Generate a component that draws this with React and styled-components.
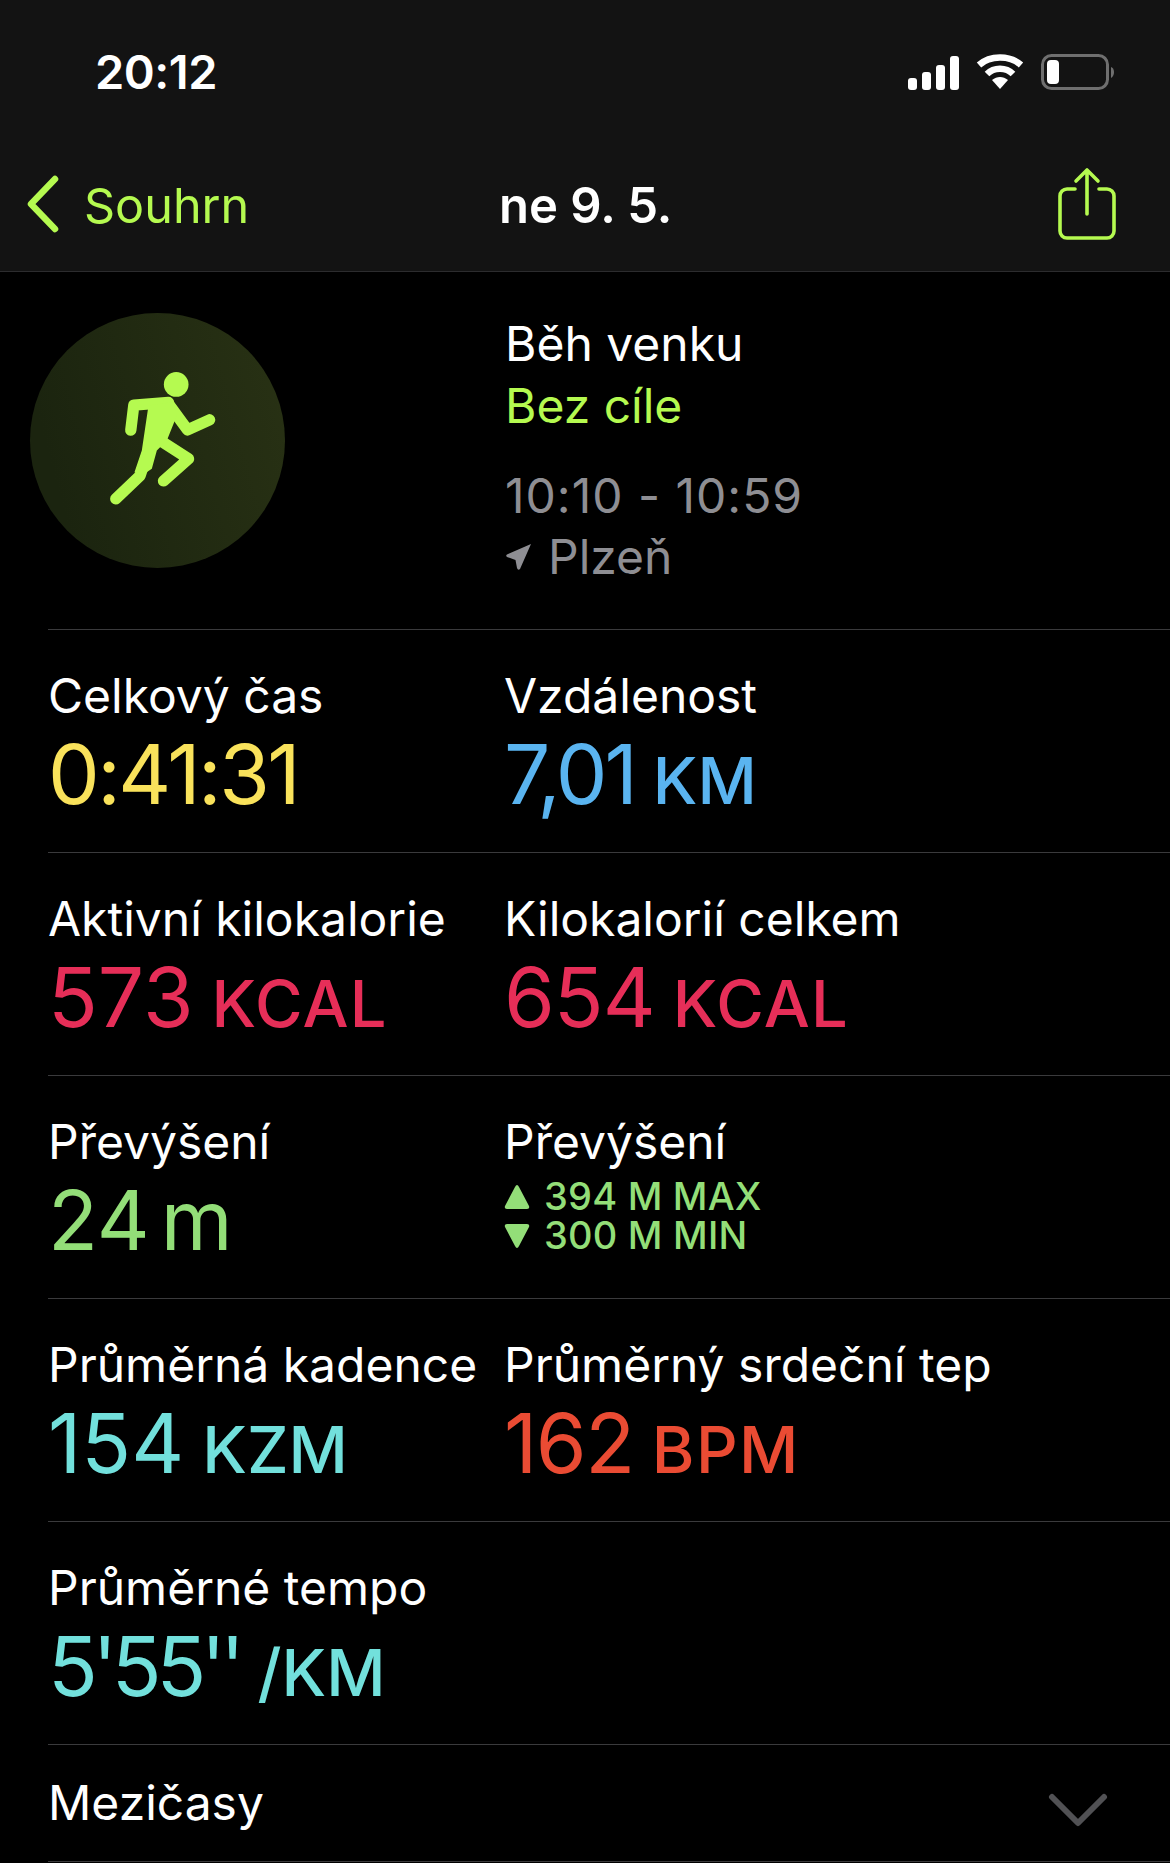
import React from 'react'
import styled, { createGlobalStyle } from 'styled-components'

const lime = '#b5fa50'

const GlobalStyle = createGlobalStyle`
  html, body {
    margin: 0;
    padding: 0;
    background: #000;
  }
  * {
    box-sizing: border-box;
  }
`

const Page = styled.div`
  width: 1170px;
  height: 1863px;
  overflow: hidden;
  background: #000;
  color: #fff;
  font-family: Inter, "Liberation Sans", sans-serif;
`

const Header = styled.header`
  height: 272px;
  background: #131313;
  border-bottom: 1px solid #2c2c2e;
`

const StatusBar = styled.div`
  height: 144px;
  padding: 46px 55px 0 95px;
  display: flex;
  justify-content: space-between;
`

const Clock = styled.div`
  font-size: 47px;
  line-height: 52px;
  font-weight: 600;
  letter-spacing: -0.5px;
`

const StatusIcons = styled.div`
  display: flex;
  align-items: flex-end;
  gap: 17px;
  height: 44px;
`

const NavBar = styled.nav`
  display: grid;
  grid-template-columns: 473px auto 1fr;
  align-items: center;
  height: 123px;
  padding: 0 54px 0 26px;
`

const BackLink = styled.div`
  display: flex;
  align-items: center;
  gap: 22px;
  color: ${lime};
  font-size: 48.5px;
`

const BackIcon = styled.span`
  display: flex;
  margin-top: -3px;
`

const Title = styled.div`
  font-size: 49px;
  font-weight: 600;
  letter-spacing: 0;
`

const ShareButton = styled.div`
  justify-self: end;
  display: flex;
  margin-top: -3px;
`

const Summary = styled.section`
  height: 357px;
  padding: 41px 0 0 30px;
  display: grid;
  grid-template-columns: 475px 1fr;
`

const Badge = styled.div`
  width: 255px;
  height: 255px;
  border-radius: 50%;
  background: linear-gradient(75deg, #1b240f 15%, #283114 95%);
  display: flex;
`

const Info = styled.div`
  display: flex;
  flex-direction: column;
`

const InfoLine = styled.div`
  font-size: 48px;
  line-height: 62px;
  color: ${(p) => p.$color || '#fff'};
  margin-top: ${(p) => p.$gap || 0}px;
  letter-spacing: ${(p) => p.$tracking || 0}px;
  display: flex;
  align-items: center;
  gap: 15px;
`

const Row = styled.div`
  margin-left: 48px;
  height: 223px;
  border-top: 1px solid #3a3a3c;
  padding-top: 35px;
  display: grid;
  grid-template-columns: 456px 1fr;
`

const Metric = styled.div`
  display: flex;
  flex-direction: column;
`

const Label = styled.div`
  font-size: 48px;
  line-height: 62px;
  white-space: nowrap;
`

const Value = styled.div`
  color: ${(p) => p.$color};
  font-size: 82px;
  line-height: 96px;
  letter-spacing: ${(p) => p.$tracking || 0}px;
  word-spacing: -12px;
  white-space: nowrap;
  display: flex;
  align-items: baseline;
  gap: 18px;
`

const Unit = styled.span`
  font-size: 65px;
  font-weight: 500;
  letter-spacing: ${(p) => p.$tracking || 0}px;
`

const Range = styled.div`
  color: #93de78;
  font-size: 38px;
  line-height: 39px;
  font-weight: 500;
  letter-spacing: 0.2px;
  padding-top: 4px;
`

const RangeLine = styled.div`
  display: flex;
  align-items: center;
  gap: 14px;
`

const Splits = styled.div`
  margin-left: 48px;
  height: 118px;
  border-top: 1px solid #3a3a3c;
  border-bottom: 1px solid #3a3a3c;
  padding: 27px 62px 0 0;
  display: flex;
  justify-content: space-between;
  align-items: flex-start;
  font-size: 48px;
  line-height: 62px;
`

const SplitsChevron = styled.span`
  display: flex;
  margin-top: 20px;
`

const Signal = () => (
  <svg width="51" height="34" viewBox="0 0 51 34" fill="#fff">
    <rect x="0" y="22" width="9" height="12" rx="3" />
    <rect x="14" y="16" width="9" height="18" rx="3" />
    <rect x="28" y="9" width="9" height="25" rx="3" />
    <rect x="42" y="0" width="9" height="34" rx="3" />
  </svg>
)

const Wifi = () => (
  <svg width="48" height="36" viewBox="0 0 48 36" fill="none" stroke="#fff" strokeWidth="6.5">
    <path d="M3 11 C14 1 34 1 45 11" />
    <path d="M11 20 C18 13 30 13 37 20" />
    <path d="M16 26 L24 35 L32 26 C27 22 21 22 16 26 Z" fill="#fff" stroke="none" />
  </svg>
)

const Battery = () => (
  <svg width="74" height="36" viewBox="0 0 74 36">
    <rect x="1.5" y="1.5" width="65" height="33" rx="9" fill="none" stroke="#6f6f6f" strokeWidth="3" />
    <rect x="6" y="6" width="12" height="24" rx="4" fill="#fff" />
    <path d="M70 13 C74 14 74 22 70 24 Z" fill="#6f6f6f" />
  </svg>
)

const Chevron = () => (
  <svg width="36" height="58" viewBox="0 0 36 58" fill="none" stroke={lime} strokeWidth="6.5" strokeLinecap="round" strokeLinejoin="round">
    <path d="M29 4 L5 29 L29 54" />
  </svg>
)

const ShareIcon = () => (
  <svg width="58" height="74" viewBox="0 0 58 74" fill="none" stroke={lime} strokeWidth="3.6" strokeLinecap="round" strokeLinejoin="round">
    <path d="M17 22 H9 A7 7 0 0 0 2 29 V64 A7 7 0 0 0 9 71 H49 A7 7 0 0 0 56 64 V29 A7 7 0 0 0 49 22 H41" />
    <path d="M29 47 V3 M18 14 L29 3 L40 14" />
  </svg>
)

const Runner = () => (
  <svg width="255" height="255" viewBox="90 68 764 764">
    <circle cx="528" cy="282" r="37" fill={lime} />
    <g fill="none" stroke={lime} strokeLinecap="round" strokeLinejoin="round" strokeWidth="34">
      <path d="M392 419 L401 344 L505 336" />
      <path d="M505 340 L562 418 L628 388" />
      <path d="M480 450 L565 505 L490 571" />
      <path d="M347 625 L420 555 L445 480" />
    </g>
    <path d="M445 345 L520 335 L530 375 L500 450 L470 480 L455 535 L425 555 L403 545 L425 480 Z" fill={lime} />
  </svg>
)

const LocationArrow = () => (
  <svg width="28" height="28" viewBox="0 0 28 28" fill="#8e8e93">
    <path d="M26 1 L15 26 Q13 28 12 25 L10.5 17 L2 14 Q0 12 3 11 Z" />
  </svg>
)

const ArrowUp = () => (
  <svg width="26" height="26" viewBox="0 0 26 26" fill="#93de78">
    <path d="M13 1 Q14 1 15 3 L25 22 Q26 25 23 25 H3 Q0 25 1 22 L11 3 Q12 1 13 1 Z" />
  </svg>
)

const ArrowDown = () => (
  <svg width="26" height="26" viewBox="0 0 26 26" fill="#93de78">
    <path d="M13 25 Q14 25 15 23 L25 4 Q26 1 23 1 H3 Q0 1 1 4 L11 23 Q12 25 13 25 Z" />
  </svg>
)

const DownChevron = () => (
  <svg width="60" height="36" viewBox="0 0 60 36" fill="none" stroke="#515154" strokeWidth="6" strokeLinecap="round" strokeLinejoin="round">
    <path d="M4 5 L30 31 L56 5" />
  </svg>
)

const StatMetric = ({ label, value, unit, color, tracking, unitTracking }) => (
  <Metric>
    <Label>{label}</Label>
    <Value $color={color} $tracking={tracking}>
      {value}
      {unit && <Unit $tracking={unitTracking}>{unit}</Unit>}
    </Value>
  </Metric>
)

export default function App() {
  return (
    <Page>
      <GlobalStyle />
      <Header>
        <StatusBar>
          <Clock>20:12</Clock>
          <StatusIcons>
            <Signal />
            <Wifi />
            <Battery />
          </StatusIcons>
        </StatusBar>
        <NavBar>
          <BackLink>
            <BackIcon>
              <Chevron />
            </BackIcon>
            Souhrn
          </BackLink>
          <Title>ne 9. 5.</Title>
          <ShareButton>
            <ShareIcon />
          </ShareButton>
        </NavBar>
      </Header>

      <Summary>
        <Badge>
          <Runner />
        </Badge>
        <Info>
          <InfoLine>Běh venku</InfoLine>
          <InfoLine $color={lime}>Bez cíle</InfoLine>
          <InfoLine $color="#8e8e93" $gap={28} $tracking={1}>10:10 - 10:59</InfoLine>
          <InfoLine $color="#8e8e93" $gap={-1}>
            <LocationArrow />
            Plzeň
          </InfoLine>
        </Info>
      </Summary>

      <Row>
        <StatMetric label="Celkový čas" value="0:41:31" color="#f9e25b" tracking={-2.5} />
        <StatMetric label="Vzdálenost" value="7,01" unit="KM" color="#5ab4f0" tracking={-3} />
      </Row>
      <Row>
        <StatMetric label="Aktivní kilokalorie" value="573" unit="KCAL" color="#e62e58" unitTracking={1.2} />
        <StatMetric label="Kilokalorií celkem" value="654" unit="KCAL" color="#e62e58" tracking={-1} unitTracking={1.2} />
      </Row>
      <Row>
        <StatMetric label="Převýšení" value="24 m" color="#93de78" />
        <Metric>
          <Label>Převýšení</Label>
          <Range>
            <RangeLine>
              <ArrowUp />
              394 M MAX
            </RangeLine>
            <RangeLine>
              <ArrowDown />
              300 M MIN
            </RangeLine>
          </Range>
        </Metric>
      </Row>
      <Row>
        <StatMetric label="Průměrná kadence" value="154" unit="KZM" color="#72e0dc" />
        <StatMetric label="Průměrný srdeční tep" value="162" unit="BPM" color="#ea4b33" tracking={-1.5} unitTracking={1.5} />
      </Row>
      <Row>
        <StatMetric label="Průměrné tempo" value="5'55''" unit="/KM" color="#72e0dc" tracking={-5.3} />
      </Row>
      <Splits>
        Mezičasy
        <SplitsChevron>
          <DownChevron />
        </SplitsChevron>
      </Splits>
    </Page>
  )
}
